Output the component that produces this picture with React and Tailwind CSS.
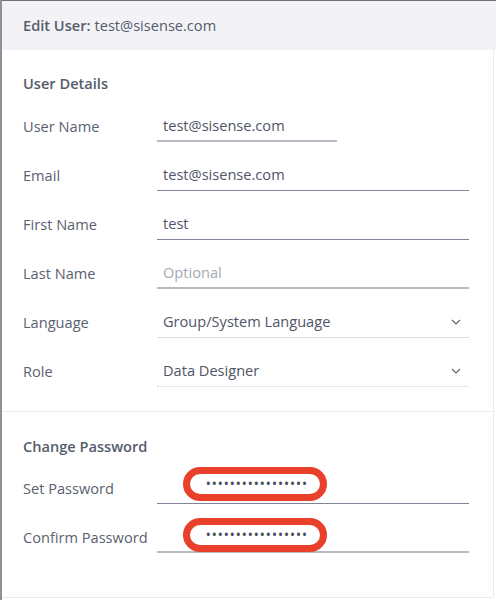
import React from "react";

const font = { fontFamily: '"Open Sans", "Liberation Sans", sans-serif' };

const Chevron = () => (
  <svg width="10" height="6" viewBox="0 0 10 6" fill="none" className="text-[#5b6372]">
    <path d="M1 1l4 4 4-4" stroke="currentColor" strokeWidth="1.1" />
  </svg>
);

const Row = ({ label, children }) => (
  <div className="flex items-center h-[31px]">
    <div className="w-[134px] shrink-0 text-[14.6px] text-[#5a6170]">{label}</div>
    {children}
  </div>
);

const Field = ({ value, placeholder, line, width = "w-[312px]", chevron }) => (
  <div className={`${width} h-[31px] flex items-center justify-between pl-[6px] pr-[8px] ${line}`}>
    {value ? (
      <span className="text-[14.6px] text-[#4f5566]">{value}</span>
    ) : (
      <span className="text-[14.6px] text-[#a4a9b2]">{placeholder}</span>
    )}
    {chevron && <Chevron />}
  </div>
);

const PasswordField = ({ line, top }) => (
  <div className={`relative w-[312px] h-[31px] ${line}`}>
    <div
      className={`absolute left-[26px] ${top} w-[144px] h-[34px] rounded-full border-[7px] border-[#e8402a] bg-white flex items-center pl-[16px]`}
    >
      <span className="text-[12px] tracking-[1.5px] text-[#474d5d] leading-none font-semibold">
        {"•".repeat(17)}
      </span>
    </div>
  </div>
);

export default function App() {
  return (
    <div className="w-[496px] h-[600px] bg-white border-l-2 border-[#8d919b] relative overflow-hidden" style={font}>
      <div className="h-[50px] bg-[#f3f3f7] border-t border-[#6f737d] flex items-center pl-[21px] text-[14.6px] text-[#555c6b]">
        <span className="font-semibold">Edit User:</span>
        <span className="ml-1">test@sisense.com</span>
      </div>
      <div className="w-[492px] h-[548px] border-r border-b border-[#ececee]">
        <div className="pt-[23px] pb-[24px] pl-[21px] border-b border-[#ececee]">
          <div className="h-[20px] leading-[20px] text-[14.6px] font-semibold text-[#555c6b]">User Details</div>
          <div className="mt-[18px] flex flex-col gap-[18px]">
            <Row label="User Name">
              <Field value="test@sisense.com" width="w-[180px]" line="border-b-2 border-[#b7bbc1]" />
            </Row>
            <Row label="Email">
              <Field value="test@sisense.com" line="border-b border-[#7f8496]" />
            </Row>
            <Row label="First Name">
              <Field value="test" line="border-b border-[#7f8496]" />
            </Row>
            <Row label="Last Name">
              <Field placeholder="Optional" line="border-b-2 border-[#b7bbc1]" />
            </Row>
            <Row label="Language">
              <Field value="Group/System Language" chevron line="border-b border-[#dcdde0]" />
            </Row>
            <Row label="Role">
              <Field value="Data Designer" chevron line="border-b border-dotted border-[#cfd1d5]" />
            </Row>
          </div>
        </div>
        <div className="pt-[24px] pl-[21px]">
          <div className="h-[20px] leading-[20px] text-[14.6px] font-semibold text-[#555c6b]">Change Password</div>
          <div className="mt-[17px] flex flex-col gap-[18px]">
            <Row label="Set Password">
              <PasswordField top="top-[-6px]" line="border-b border-[#7f8496]" />
            </Row>
            <Row label="Confirm Password">
              <PasswordField top="top-[-4px]" line="border-b-2 border-[#b7bbc1]" />
            </Row>
          </div>
        </div>
      </div>
    </div>
  );
}
